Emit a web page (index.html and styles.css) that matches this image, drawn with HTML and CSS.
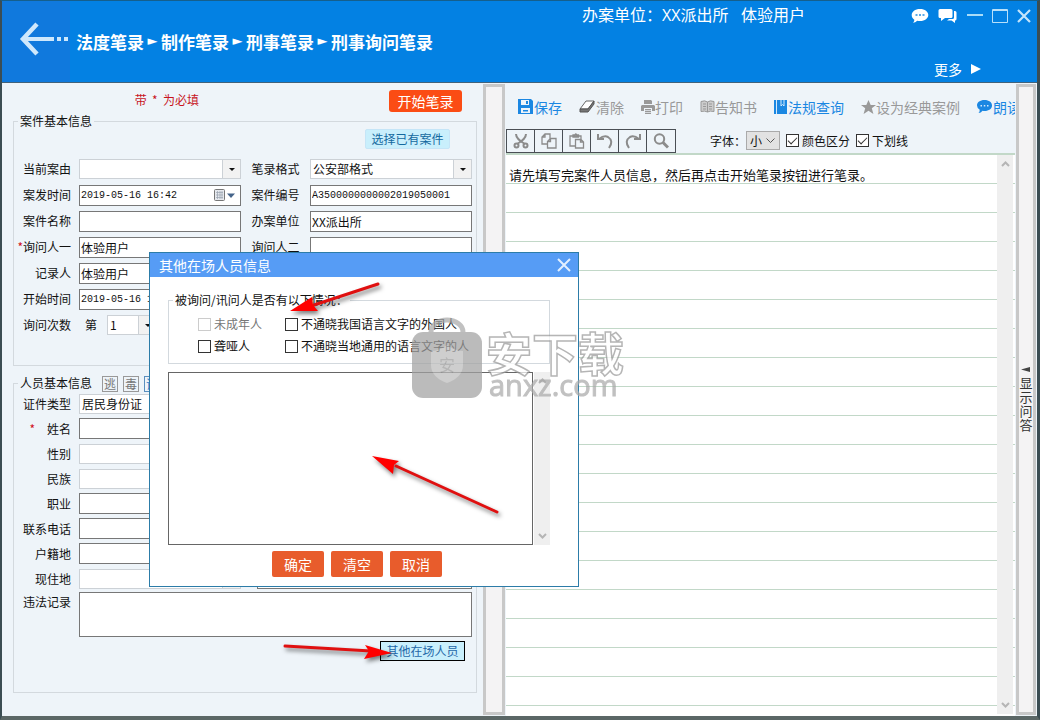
FILE: index.html
```html
<!DOCTYPE html>
<html lang="zh-CN">
<head>
<meta charset="utf-8">
<title>法度笔录</title>
<link rel="stylesheet" href="styles.css">
</head>
<body>
<div class="window">
  <header class="header">
    <button class="back" aria-label="返回">
      <svg width="50" height="34" viewBox="0 0 50 34" fill="none" stroke="#cfe8fc"><path d="M19 2 5 17l14 15" stroke-width="4.500"/><path d="M5 17h31M39 17h4M46 17h4" stroke-width="4"/></svg>
    </button>
    <h1 class="crumbs">法度笔录<span class="sep">►</span>制作笔录<span class="sep">►</span>刑事笔录<span class="sep">►</span>刑事询问笔录</h1>
    <div class="unit">办案单位：XX派出所&nbsp;&nbsp; 体验用户</div>
    <div class="corner">
      <div class="winbtns">
        <button aria-label="消息"><svg width="18" height="16" viewBox="0 0 18 16"><path d="M9 1c5 0 8.300 2.700 8.300 6S14 13 9 13c-1 0-2 0-2.800-.3C5 14 3.500 14.700 2 14.700c1-.9 1.400-2 1.300-3C1.700 10.500.7 9 .7 7 .7 3.700 4 1 9 1z" fill="#fff"/><path d="M4.500 6h2v2h-2zM8 6h2v2H8zM11.500 6h2v2h-2z" fill="#5aa9e8"/></svg></button>
        <button aria-label="会话"><svg width="20" height="16" viewBox="0 0 20 16" fill="#fff"><path d="M2 1h11q1.500 0 1.500 1.500v6Q14.500 10 13 10H7l-4 3v-3H2Q.5 10 .5 8.500v-6Q.5 1 2 1z"/><path d="M16 3h1q1.500 0 1.500 1.500V11q0 1.500-1.500 1.500V15l-3.500-2.500H9l2-1.500h3.500q1.500 0 1.500-1.500z"/></svg></button>
        <button aria-label="最小化"><svg width="16" height="16" viewBox="0 0 16 16" stroke="#a9dcf8" stroke-width="2"><path d="M0 7h16"/></svg></button>
        <button aria-label="最大化"><svg width="16" height="16" viewBox="0 0 16 16" fill="none" stroke="#b9e0fa"><path d="M.5 1.500h15v13H.5zM0 2.500h16"/></svg></button>
        <button aria-label="关闭"><svg width="14" height="16" viewBox="0 0 14 16" stroke="#c3e4fb" stroke-width="2.200"><path d="m1 2 12 12M13 2 1 14"/></svg></button>
      </div>
      <button class="more">更多 <svg width="12" height="10" viewBox="0 0 12 10"><path d="M1 0v10l10-5z" fill="#fff"/></svg></button>
    </div>
  </header>

  <main class="main">
    <section class="left">
      <div class="topline"><span class="hint">带 &nbsp;* &nbsp;为必填</span><button class="start">开始笔录</button></div>

      <fieldset class="group case">
        <legend>案件基本信息</legend>
        <div class="tools"><button class="soft">选择已有案件</button></div>
        <div class="form">
          <label for="cause">当前案由</label><span class="combo"><select id="cause"><option></option></select></span>
          <label for="format" class="second">笔录格式</label><span class="combo"><select id="format"><option>公安部格式</option></select></span>

          <label for="time">案发时间</label>
          <span class="date"><input id="time" class="mono" value="2019-05-16 16:42"><svg width="22" height="13" viewBox="0 0 22 13"><rect x=".5" y=".5" width="10" height="11" rx="1" fill="#e6e9ee" stroke="#777"/><path d="M2 3.500h7M2 6h7M2 8.500h7M3.500 2v8M6 2v8M8 2v8" stroke="#9aa3b0" stroke-width=".7"/><path d="M13 4.500h8L17 9z" fill="#45648a"/></svg></span>
          <label for="no" class="second">案件编号</label><input id="no" class="mono" value="A3500000000002019050001">

          <label for="name">案件名称</label><input id="name">
          <label for="dept" class="second">办案单位</label><input id="dept" value="XX派出所">

          <label for="asker"><i>*</i>询问人一</label><input id="asker" value="体验用户">
          <label for="asker2" class="second">询问人二</label><input id="asker2">

          <label for="rec">记录人</label><input id="rec" value="体验用户">
          <span></span><span></span>

          <label for="begin">开始时间</label><input id="begin" class="mono" value="2019-05-16 16:42">
          <span></span><span></span>

          <label for="times">询问次数</label>
          <span class="times">第 <span class="combo"><select id="times"><option>1</option></select></span></span>
        </div>
      </fieldset>

      <fieldset class="group person">
        <legend>人员基本信息 <span class="tag">逃</span><span class="tag">毒</span><span class="tag blue">证</span></legend>
        <div class="form tight">
          <label for="idtype">证件类型</label><span class="combo"><select id="idtype"><option>居民身份证</option></select></span><span></span><span></span>
          <label for="pname"><i class="apart">*</i>姓名</label><input id="pname"><span></span><span></span>
          <label for="sex">性别</label><span class="combo"><select id="sex"><option></option></select></span><span></span><span></span>
          <label for="nation">民族</label><span class="combo"><select id="nation"><option></option></select></span><span></span><span></span>
          <label for="job">职业</label><input id="job"><span></span><span></span>
          <label for="tel">联系电话</label><input id="tel"><span></span><span></span>
          <label for="home">户籍地</label><input id="home"><span></span><span></span>
          <label for="addr">现住地</label><span class="combo"><select id="addr"><option></option></select></span><input class="detail" aria-label="详细地址">
          <label for="record" class="toplabel">违法记录</label><textarea id="record" class="record"></textarea>
        </div>
        <div class="tools"><button class="soft focus">其他在场人员</button></div>
      </fieldset>
    </section>

    <div class="splitter"></div>

    <section class="editor">
      <div class="actions">
        <button class="on"><svg width="15" height="15" viewBox="0 0 15 15"><path d="M0 0h13l2 2v13H0z" fill="#1b87e2"/><path d="M3 1h8v5H3zM3 9h9v5H3z" fill="#eef4fa"/><path d="M8 2h2v3H8zM5 11h5v1.500H5z" fill="#1b87e2"/></svg>保存</button>
        <button><svg width="17" height="13" viewBox="0 0 17 13"><path d="M7 1h8L9 9H1z" fill="#fff" stroke="#666"/><path d="M1 9h8l6-8v3l-6 8H1z" fill="#777" stroke="#555"/></svg>清除</button>
        <button><svg width="14" height="14" viewBox="0 0 14 14" fill="#999"><path d="M3 0h7l1 1v3H3z"/><path d="M1 5h12l1 1v5h-3V8H3v3H0V6z"/><path d="M4 9h6v5H4z"/><path d="M4 10.500h6M4 12.500h6" stroke="#eef4fa" stroke-width=".7"/></svg>打印</button>
        <button><svg width="15" height="13" viewBox="0 0 15 13"><path d="M1 1.500q4-1.500 6.500.5Q10 0 14 1.500v10q-4-1-6.500.5-2.500-1.500-6.500-.5z" fill="#ccc" stroke="#999"/><path d="M7.500 2v10M3 4h3M3 6.500h3M3 9h3M9 4h3M9 6.500h3M9 9h3" stroke="#999"/></svg>告知书</button>
        <button class="on"><svg width="13" height="14" viewBox="0 0 13 14"><path d="M0 0h13v14H0z" fill="#1b87e2"/><path d="M2.500 0v14M7 0v6l1.500-1.500L10 6V0" stroke="#d5eafc" fill="none"/></svg>法规查询</button>
        <button><svg width="15" height="14" viewBox="0 0 15 14"><path d="m7.500 0 2.200 5h5.300l-4.200 3.300L12.400 14 7.500 10.700 2.600 14l1.600-5.700L0 5h5.300z" fill="#999"/></svg>设为经典案例</button>
        <button class="on"><svg width="15" height="13" viewBox="0 0 15 13"><path d="M7.500 0C12 0 15 2.300 15 5.500S12 11 7.500 11q-1 0-2-.2Q4 13 1.500 13 3 11.500 2.700 9.800 0 8 0 5.500C0 2.300 3 0 7.500 0z" fill="#1b87e2"/><path d="M3.500 5h1.500v1.500H3.500zM6.800 5h1.500v1.500H6.800zM10 5h1.500v1.500H10z" fill="#d5eafc"/></svg>朗读</button>
      </div>
      <div class="options">
        <div class="iconbar">
          <button aria-label="剪切"><svg width="16" height="16" viewBox="0 0 16 16" fill="none" stroke="#8b8b8b" stroke-width="2"><path d="M3 1q0 5 9 10M13 1q0 5-9 10"/><circle cx="3.500" cy="12.500" r="2"/><circle cx="12.500" cy="12.500" r="2"/></svg></button>
          <button aria-label="复制"><svg width="16" height="16" viewBox="0 0 16 16" fill="none" stroke="#8b8b8b" stroke-width="1.300"><path d="M6 11H1V4l3-3h5v5M4 1v3H1M6.500 15V8.500l3-3H15V15zM9.500 5.500v3h-3"/></svg></button>
          <button aria-label="粘贴"><svg width="16" height="16" viewBox="0 0 16 16" fill="none" stroke="#8b8b8b" stroke-width="1.300"><path d="M6 13H1V3h11v3M4 4V2h2q.5-1.500 1-1t1 1h1.500v2zM6.500 15V6.500H12l2.500 2.500v6zM11.500 6.500V9h3"/></svg></button>
          <button aria-label="撤销"><svg width="16" height="16" viewBox="0 0 16 16" fill="none" stroke="#8b8b8b" stroke-width="2"><path d="M1 1v5h6M2 6q5-4 9-2 6 4 1 11"/></svg></button>
          <button aria-label="重做"><svg width="16" height="16" viewBox="0 0 16 16" fill="none" stroke="#8b8b8b" stroke-width="2"><path d="M15 1v5H9M14 6Q9 2 5 4q-6 4-1 11"/></svg></button>
          <button aria-label="查找"><svg width="16" height="16" viewBox="0 0 16 16" fill="none" stroke="#8b8b8b"><circle cx="6.500" cy="6" r="4.700" stroke-width="2"/><path d="m10 9.500 5 5" stroke-width="3"/></svg></button>
        </div>
        <label class="fontsize">字体：<span class="pick"><select><option>小</option></select><svg width="9" height="6" viewBox="0 0 9 6" fill="none" stroke="#555"><path d="m.5.5 4 4 4-4"/></svg></span></label>
        <label class="check"><input type="checkbox" checked>颜色区分</label>
        <label class="check"><input type="checkbox" checked>下划线</label>
      </div>
      <div class="paper">
        <textarea class="notes" aria-label="笔录">请先填写完案件人员信息，然后再点击开始笔录按钮进行笔录。</textarea>
        <div class="scroll"><svg width="9" height="6" viewBox="0 0 9 6"><path d="m1 5 3.500-3.500L8 5"/></svg><svg width="9" height="6" viewBox="0 0 9 6"><path d="m1 1 3.500 3.500L8 1"/></svg></div>
      </div>
    </section>

    <button class="splitter qa"><svg width="10" height="5" viewBox="0 0 10 5"><path d="M0 2.500 9 0v5z" fill="#444"/></svg><span>显示问答</span></button>
  </main>
</div>

<div class="dialog" role="dialog" aria-label="其他在场人员信息">
  <div class="titlebar"><span>其他在场人员信息</span><button aria-label="关闭"><svg width="14" height="14" viewBox="0 0 14 14" stroke="#e3f0ff" stroke-width="2"><path d="m1 1 12 12M13 1 1 13"/></svg></button></div>
  <div class="dbody">
    <fieldset class="group conditions">
      <legend>被询问/讯问人是否有以下情况：</legend>
      <div class="choices">
        <label class="check off"><input type="checkbox" disabled>未成年人</label>
        <label class="check"><input type="checkbox">不通晓我国语言文字的外国人</label>
        <label class="check"><input type="checkbox">聋哑人</label>
        <label class="check"><input type="checkbox">不通晓当地通用的语言文字的人</label>
      </div>
    </fieldset>
    <div class="memo">
      <textarea aria-label="在场人员"></textarea>
      <div class="scroll"><svg width="9" height="6" viewBox="0 0 9 6"><path d="m1 5 3.500-3.500L8 5"/></svg><svg width="9" height="6" viewBox="0 0 9 6"><path d="m1 1 3.500 3.500L8 1"/></svg></div>
    </div>
    <div class="dbuttons"><button>确定</button><button>清空</button><button>取消</button></div>
  </div>
</div>

<svg class="overlay" width="1040" height="720" viewBox="0 0 1040 720">
  <g opacity=".72">
    <path d="M431 334v-2a16 12 0 0 1 32 0v2" fill="none" stroke="#aaa" stroke-width="5"/>
    <rect x="412" y="332" width="70" height="66" rx="11" fill="#a2a2a2"/>
    <path d="M447 345q8 6 16 6v14q0 12-16 18-16-6-16-18v-14q8 0 16-6z" fill="#bcbcbc"/>
    <text x="447" y="371" text-anchor="middle" class="wm-seal">安</text>
    <text x="486" y="371" class="wm-cn">安下载</text>
    <text x="489" y="396" class="wm-en">anxz.com</text>
  </g>
  <g class="arrows">
    <path d="m378 284-64 21" /><path class="tip" d="m290 311 22-14 1 8 5 6z"/>
    <path d="m497 512-101-46"/><path class="tip" d="m372 456 27 5-5 4-1 9z"/>
    <path d="m285 646 86 5"/><path class="tip" d="m392 653-27-8 4 6-5 8z"/>
  </g>
</svg>
</body>
</html>
```
FILE: styles.css
```css
* { box-sizing: border-box; }
body {
  margin: 0;
  font: 12px/16px "Noto Sans CJK SC", sans-serif;
  color: #111;
}
button, input, select, textarea { font: inherit; color: inherit; margin: 0; border-radius: 0; }
button { padding: 0; border: 0; background: none; }
svg { display: block; flex: none; }

.window {
  display: flex;
  flex-direction: column;
  height: 100vh;
  border: solid #3b4d53;
  border-width: 1px 3px 4px 2px;
  border-top-color: #155f8c;
  border-bottom-color: #5b6766;
  background: #eef4f9;
}

/* header */
.header {
  display: flex;
  height: 82px;
  flex: none;
  background: #0381e3;
  border-bottom: 1px solid #42627a;
  color: #fff;
}
.back { width: 68px; padding: 0 0 5px 16px; background: #1079dd; overflow: hidden; }
.crumbs { margin: 0 0 0 6px; font-size: 17px; line-height: 82px; font-weight: 700; white-space: nowrap; }
.sep { display: inline-block; width: 17px; text-align: center; font-size: 13px; line-height: 80px; vertical-align: top; font-family: "DejaVu Sans", sans-serif; font-weight: 400; }
.unit { margin-left: auto; margin-right: 106px; padding-top: 2px; font-family: "Open Sans", "Noto Sans CJK SC", sans-serif; font-size: 16px; line-height: 24px; white-space: nowrap; }
.corner { display: flex; flex-direction: column; justify-content: space-between; padding: 7px 6px 3px 0; }
.winbtns { display: flex; gap: 9px; }
.more { display: flex; align-items: center; gap: 8px; margin-left: 23px; font-size: 14px; line-height: 20px; }

/* layout */
.main { display: flex; flex: 1; min-height: 0; }
.left { flex: none; width: 481px; padding: 7px 6px 0 11px; }
.splitter { flex: none; width: 22px; margin: 1px 0; border: 3px solid #c8c8c8; background: #f4f3f4; }
.qa { width: 20px; margin-right: 1px; display: flex; flex-direction: column; align-items: center; justify-content: center; gap: 4px; color: #333; font-size: 13px; line-height: 14px; }
.qa span { width: 13px; }

/* form column */
.topline { display: flex; justify-content: flex-end; gap: 190px; padding-right: 15px; }
.hint { padding-top: 2px; color: #c8141e; }
.start { width: 73px; height: 22px; border-radius: 3px; background: #fb4c14; color: #fff; font-size: 14px; line-height: 20px; }
.group { margin: 0; padding: 0; min-width: 0; border: 1px solid #d3d9de; }
.group legend { margin-left: 4px; padding: 0 2px; line-height: 16px; height: 16px; }
.case { margin-top: 1px; padding-bottom: 27px; }
.person { margin-top: 9px; padding-bottom: 31px; }
.person legend { display: flex; gap: 5px; }
.tag { height: 16px; width: 16px; margin-top: 1px; border: 1px solid #999; color: #777; line-height: 14px; text-align: center; }
.tag:first-of-type { margin-left: 5px; }
.blue { color: #2d7ac8; border-color: #5a8fbf; }
.tools { display: flex; justify-content: flex-end; padding: 0 26px 7px 0; }
.person .tools { padding: 3px 11px 0 0; }
.soft { width: 85px; height: 20px; border: 1px solid #c5e5f7; background: #c9effc; color: #14699f; line-height: 18px; border-radius: 2px; }
.focus { border: 1px solid #000; border-radius: 0; color: #2467a8; }

.form {
  display: grid;
  grid-template-columns: 57px 1fr 53px 1fr;
  grid-auto-rows: 26px;
  column-gap: 8px;
  align-items: center;
  padding-right: 4px;
}
.tight { grid-template-rows: repeat(8, 25px) 47px; }
.form label { text-align: right; white-space: nowrap; }
.form .second { text-align: center; }
.form i { font-style: normal; color: #d0101c; }
.form .apart { margin-right: 12px; }
.form input, .form select { display: block; width: 100%; height: 21px; padding: 0 1px; border: 1px solid #777; background: #fff; line-height: 18px; }
.form .mono { font-family: "Liberation Mono", monospace; font-size: 10px; }
.form .combo select { height: 20px; padding: 0 2px; border-color: #ccd1d6; }
.combo { position: relative; display: block; }
.combo select { appearance: none; }
.combo::before { content: ""; position: absolute; right: 1px; top: 1px; width: 17px; height: 18px; border-left: 1px solid #ccd1d6; background: #f2f2f2; }
.combo::after { content: ""; position: absolute; right: 6px; top: 9px; border: solid transparent; border-width: 3px 3px 0; border-top-color: #111; }
.date { position: relative; }
.date svg { position: absolute; right: 5px; top: 4px; }
.times { display: flex; align-items: center; gap: 10px; padding-left: 6px; }
.times .combo { width: 50px; }
.form .detail { grid-column: span 2; width: auto; margin-left: 8px; }
.toplabel { align-self: start; padding-top: 3px; }
.record { grid-column: span 3; width: 100%; height: 45px; border: 1px solid #777; resize: none; background: #fff; }

/* editor column */
.editor { flex: 1; min-width: 0; display: flex; flex-direction: column; padding: 0 1px; }
.actions { display: flex; gap: 17px; height: 45px; padding: 2px 0 0 12px; overflow: hidden; white-space: nowrap; }
.actions button { display: flex; flex: none; align-items: center; color: #999; font-size: 14px; line-height: 20px; }
.actions .on { color: #1b87e2; gap: 1px; }
.options { display: flex; align-items: center; height: 25px; gap: 6px; }
.iconbar { display: flex; border: 1px solid #4a4f55; margin-right: 28px; }
.iconbar button { display: flex; align-items: center; justify-content: center; width: 28px; height: 22px; border-right: 1px solid #4a4f55; }
.iconbar button:last-child { border: 0; }
.fontsize { display: flex; align-items: center; white-space: nowrap; }
.pick { position: relative; display: block; }
.pick select { display: block; appearance: none; width: 34px; height: 19px; padding: 0 3px; border: 1px solid #aaa; background: #e2e2e2; line-height: 16px; }
.pick svg { position: absolute; right: 5px; top: 7px; }
.check { display: flex; align-items: center; gap: 3px; white-space: nowrap; }
.check input { appearance: none; flex: none; display: grid; place-items: center; width: 13px; height: 13px; border: 1px solid #333; background: #fff; }
.check input:checked::before { content: ""; width: 8px; height: 4px; margin-bottom: 3px; border: solid #333; border-width: 0 0 1px 1px; transform: rotate(-45deg); }
.check.off { color: #777; }
.check.off input { border-color: #ccc; }
.paper {
  display: flex;
  flex: 1;
  min-height: 0;
  padding-right: 2px;
  border-top: 2px solid #c2d8c8;
  background: repeating-linear-gradient(#fff 0 28px, #c2d8c8 28px 29px);
}
.notes { flex: 1; min-width: 0; padding: 5px 3px 0; border: 0; resize: none; overflow: hidden; background: none; font-size: 13px; line-height: 29px; }
.scroll { flex: none; display: flex; flex-direction: column; align-items: center; justify-content: space-between; width: 16px; padding: 6px 0; background: #efefef; }
.paper .scroll { margin-bottom: 2px; }
.scroll path { fill: none; stroke: #b5b5b5; stroke-width: 2; }

/* dialog */
.dialog { position: absolute; left: 149px; top: 252px; width: 430px; border: 1px solid #2c7ca8; background: #fff; }
.titlebar { display: flex; justify-content: space-between; align-items: center; height: 24px; padding: 0 7px 0 9px; background: #569cf5; color: #fff; font-size: 14px; }
.titlebar span { padding-bottom: 1px; }
.dbody { padding: 15px 28px 9px 18px; }
.choices { display: grid; grid-template-columns: 87px 1fr; grid-auto-rows: 22px; padding: 5px 0 6px 29px; }
.conditions legend { white-space: nowrap; }
.memo { display: flex; gap: 1px; height: 173px; margin-top: 8px; }
.memo textarea { flex: 1; border: 1px solid #666; resize: none; background: #fff; }
.dbuttons { display: flex; justify-content: center; gap: 7px; padding: 6px 4px 0 0; }
.dbuttons button { width: 52px; height: 26px; border-radius: 2px; background: #e85c2c; color: #fff; font-size: 14px; line-height: 24px; }

/* annotations */
.overlay { position: absolute; left: 0; top: 0; pointer-events: none; }
.wm-seal { font-size: 16px; fill: #999; }
.wm-cn { font-size: 46px; font-weight: 700; fill: #fff; stroke: #999; stroke-width: 1.5px; }
.wm-en { font-family: "Open Sans", sans-serif; font-size: 29px; fill: #aaa; stroke: #aaa; stroke-width: 1px; }
.arrows { fill: none; stroke: #e01010; stroke-width: 3; stroke-linecap: round; filter: drop-shadow(2px 3px 2px rgba(0, 0, 0, .5)); }
.arrows .tip { fill: #f00; stroke: none; }
```
